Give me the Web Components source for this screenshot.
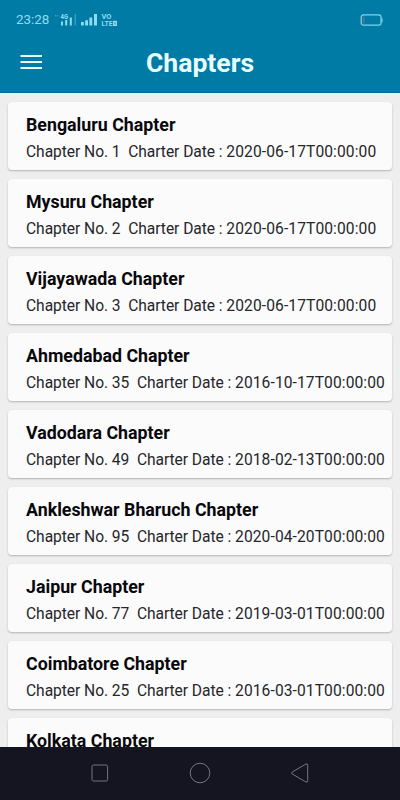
<!DOCTYPE html>
<html lang="en">
<head>
<meta charset="utf-8">
<meta name="viewport" content="width=device-width, initial-scale=1">
<title>Chapters</title>
<style>
    body {
        margin: 0;
        font-family: Roboto, "Liberation Sans", sans-serif;
    }
</style>
</head>
<body>
<chapters-app></chapters-app>

<script>
class StatusBar extends HTMLElement {
    connectedCallback() {
        this.attachShadow({ mode: 'open' });
        this.shadowRoot.innerHTML = `
            <style>
                :host {
                    display: flex;
                    align-items: center;
                    height: 40px;
                    padding: 0 17px 0 16px;
                    box-sizing: border-box;
                    color: #8fdcf2;
                }

                .time {
                    font-size: 13.4px;
                    line-height: 16px;
                    width: 39px;
                    white-space: nowrap;
                }

                svg {
                    display: block;
                }

                .battery {
                    margin-left: auto;
                }

                text {
                    font-weight: 700;
                    fill: currentColor;
                }
            </style>

            <span class="time">${this.getAttribute('time')}</span>
            <svg width="64" height="18" viewBox="0 0 64 18" fill="currentColor">
                <g opacity=".4">
                    <rect x="0" y="4" width="1.5" height="1.5"/>
                    <rect x="2.5" y="4" width="1" height="1.5"/>
                </g>
                <text x="5.5" y="8" font-size="6.5" textLength="7.5" lengthAdjust="spacingAndGlyphs">4G</text>
                <rect x="6" y="10.5" width="2" height="4"/>
                <rect x="10.2" y="9" width="2" height="5.5"/>
                <rect x="14.8" y="6.5" width="2" height="8"/>
                <rect x="19.5" y="3" width="1.6" height="11.5" opacity=".35"/>
                <rect x="26" y="11" width="2.8" height="3.5"/>
                <rect x="30.2" y="9.3" width="2.8" height="5.2"/>
                <rect x="34.4" y="6.5" width="2.8" height="8"/>
                <rect x="39" y="3" width="3" height="11.5"/>
                <text x="46.5" y="8" font-size="6.6" textLength="10" lengthAdjust="spacingAndGlyphs">VO</text>
                <text x="46.5" y="15" font-size="6.8" textLength="11" lengthAdjust="spacingAndGlyphs">LTE</text>
                <rect x="58" y="9.8" width="4" height="5.2" rx=".6"/>
                <rect x="59.6" y="11.2" width=".9" height="2.4" fill="#007ba5"/>
            </svg>
            <svg class="battery" width="23" height="13" viewBox="0 0 23 13" fill="none">
                <rect x="1.2" y=".8" width="19.8" height="10.4" rx="2.2" stroke="#7dd5ef" stroke-width="1.2"/>
                <path d="M22 4.2v4" stroke="#7dd5ef" stroke-width="1.2"/>
                <rect x="2.8" y="2.6" width="1.6" height="7" fill="#65748f"/>
            </svg>
        `;
    }
}

class AppHeader extends HTMLElement {
    connectedCallback() {
        this.attachShadow({ mode: 'open' });
        this.shadowRoot.innerHTML = `
            <style>
                :host {
                    display: block;
                    height: 93px;
                    box-sizing: border-box;
                    background: #007ba5;
                    border-bottom: 1px solid #006f97;
                }

                .toolbar {
                    display: grid;
                    grid-template-columns: 62px 1fr 62px;
                    align-items: center;
                    height: 46px;
                }

                .menu {
                    padding: 0 0 2px 20px;
                    border: none;
                    background: transparent;
                    color: #e2fdff;
                }

                .menu svg {
                    display: block;
                }

                h1 {
                    margin: 0;
                    color: #e8fdff;
                    font-size: 26.6px;
                    font-weight: 700;
                    line-height: 32px;
                    text-align: center;
                }
            </style>

            <status-bar time="23:28"></status-bar>
            <div class="toolbar">
                <button class="menu" aria-label="Menu">
                    <svg width="22" height="16" viewBox="0 0 22 16" fill="currentColor">
                        <path d="M.5 1h21.5v2H.5zM.5 7h21.5v2H.5zM.5 13h21.5v2H.5z"/>
                    </svg>
                </button>
                <h1><slot></slot></h1>
            </div>
        `;
    }
}

class ChapterCard extends HTMLElement {
    connectedCallback() {
        this.attachShadow({ mode: 'open' });
        this.shadowRoot.innerHTML = `
            <style>
                :host {
                    display: block;
                    flex: none;
                    height: 68px;
                    padding: 12px 0 0 18px;
                    box-sizing: border-box;
                    border-radius: 4px;
                    background: #fbfbfb;
                    box-shadow: 0 1px 2px rgba(0, 0, 0, 0.25);
                }

                h2 {
                    margin: 0;
                    color: #08080c;
                    font-size: 17.8px;
                    font-weight: 700;
                    line-height: 22px;
                }

                p {
                    margin: 6px 0 0;
                    color: #26262a;
                    font-size: 15.6px;
                    letter-spacing: -0.055px;
                    line-height: 20px;
                    white-space: pre;
                }

                .date {
                    letter-spacing: 0.09px;
                }
            </style>

            <h2><slot></slot></h2>
            ${this.hasAttribute('number') ? `<p>Chapter No. ${this.getAttribute('number')}  Charter Date : <span class="date">${this.getAttribute('date')}</span></p>` : ''}
        `;
    }
}

class NavigationBar extends HTMLElement {
    connectedCallback() {
        this.attachShadow({ mode: 'open' });
        this.shadowRoot.innerHTML = `
            <style>
                :host {
                    display: flex;
                    align-items: center;
                    justify-content: center;
                    gap: 76px;
                    height: 53px;
                    padding-bottom: 1px;
                    box-sizing: border-box;
                    background: #141520;
                }

                svg {
                    display: block;
                    fill: none;
                    stroke: #74757e;
                    stroke-width: 1;
                }
            </style>

            <svg width="24" height="24" viewBox="0 0 24 24"><rect x="4" y="4" width="15.6" height="16" rx="1.5"/></svg>
            <svg width="24" height="24" viewBox="0 0 24 24"><circle cx="12" cy="12" r="9.8"/></svg>
            <svg width="24" height="24" viewBox="0 0 24 24"><path d="M4.4 10.9 17.8 3.1Q19.7 2.2 19.7 4.2V19.8Q19.7 21.8 17.8 20.9L4.4 13.1Q2.8 12 4.4 10.9z"/></svg>
        `;
    }
}

class ChaptersApp extends HTMLElement {
    connectedCallback() {
        const chapters = [
            ['Bengaluru', 1, '2020-06-17'],
            ['Mysuru', 2, '2020-06-17'],
            ['Vijayawada', 3, '2020-06-17'],
            ['Ahmedabad', 35, '2016-10-17'],
            ['Vadodara', 49, '2018-02-13'],
            ['Ankleshwar Bharuch', 95, '2020-04-20'],
            ['Jaipur', 77, '2019-03-01'],
            ['Coimbatore', 25, '2016-03-01']
        ];

        this.attachShadow({ mode: 'open' });
        this.shadowRoot.innerHTML = `
            <style>
                :host {
                    display: flex;
                    flex-direction: column;
                    height: 800px;
                    overflow: hidden;
                    background: #eeeeee;
                }

                main {
                    display: flex;
                    flex: 1;
                    flex-direction: column;
                    gap: 9px;
                    min-height: 0;
                    padding: 9px 8px 0;
                    overflow: hidden;
                }
            </style>

            <app-header>Chapters</app-header>
            <main>
                ${chapters.map(([name, number, date]) => `
                    <chapter-card number="${number}" date="${date}T00:00:00">${name} Chapter</chapter-card>
                `).join('')}
                <chapter-card>Kolkata Chapter</chapter-card>
            </main>
            <navigation-bar></navigation-bar>
        `;
    }
}

customElements.define('status-bar', StatusBar);
customElements.define('app-header', AppHeader);
customElements.define('chapter-card', ChapterCard);
customElements.define('navigation-bar', NavigationBar);
customElements.define('chapters-app', ChaptersApp);
</script>
</body>
</html>
